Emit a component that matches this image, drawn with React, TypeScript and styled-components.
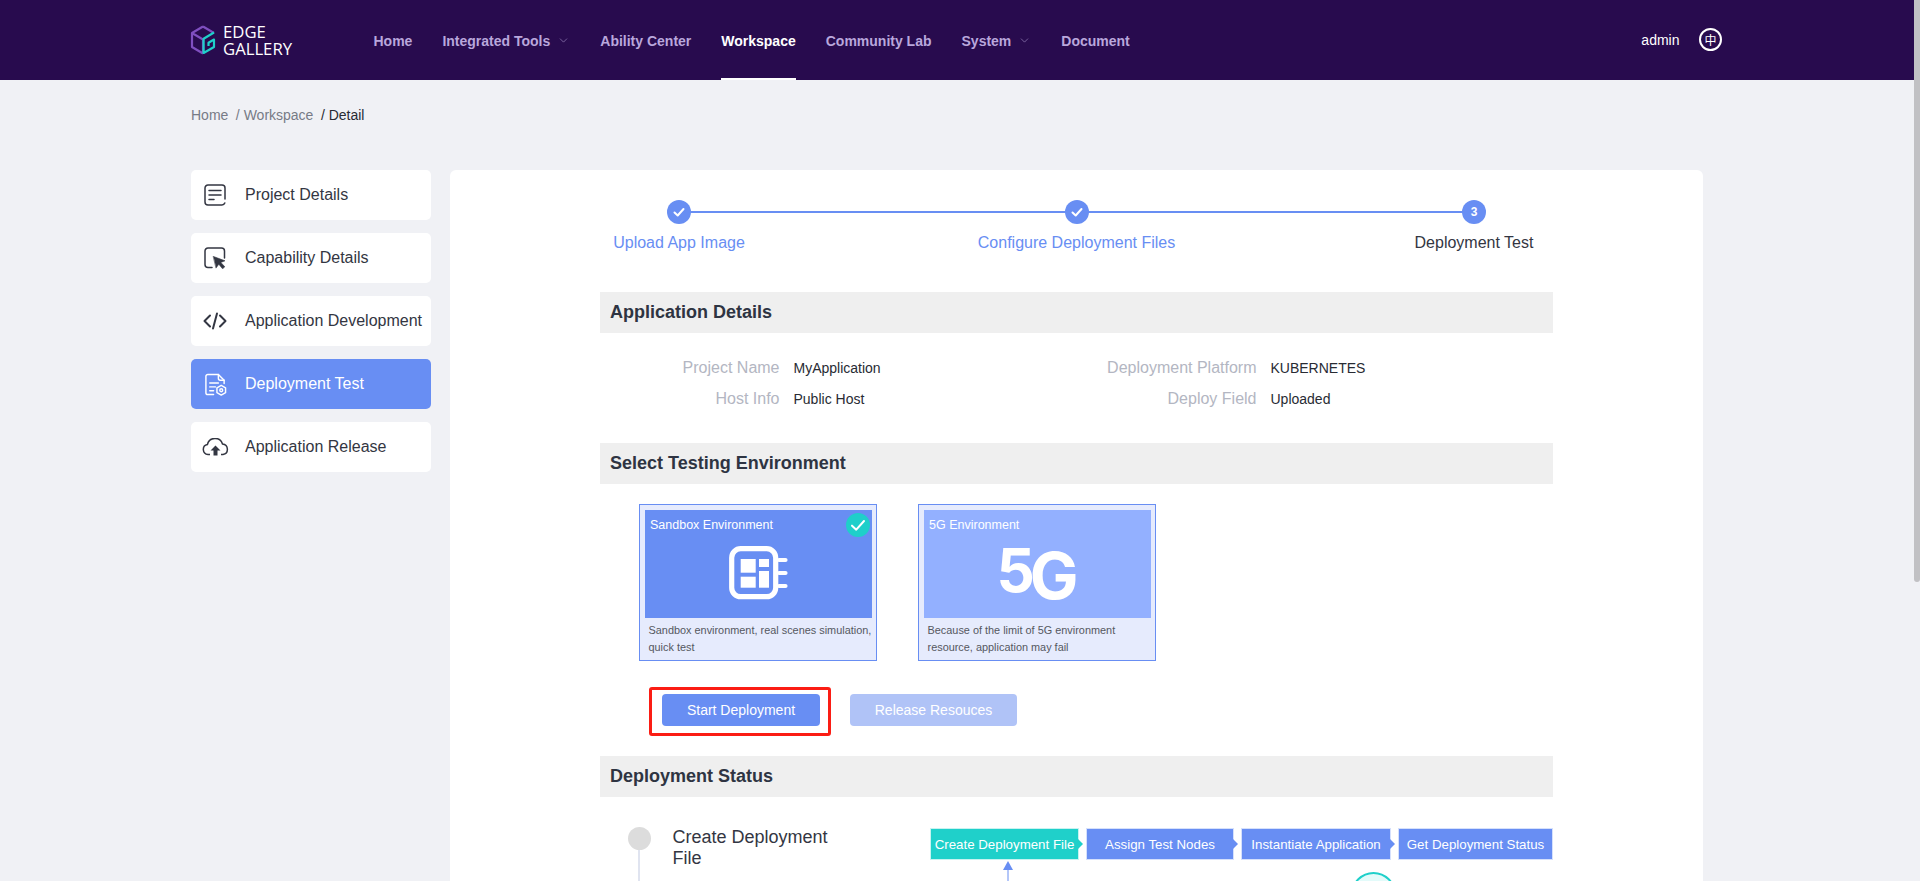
import React from "react";
import styled, { createGlobalStyle } from "styled-components";
import { ChevronDown } from "lucide-react";

const Global = createGlobalStyle`
  html, body { margin: 0; padding: 0; height: 100%; overflow: hidden; background: #f0f1f5; }
  body { font-family: "Liberation Sans", Arial, sans-serif; }
  * { box-sizing: border-box; }
`;

const Viewport = styled.div`
  position: relative;
  height: 100vh;
  overflow: hidden;
  padding-right: 6px;
`;
const ScrollThumb = styled.div`
  position: absolute;
  top: 0;
  right: 0;
  width: 6px;
  height: 582px;
  background: #c1c1c4;
  border-radius: 0 0 3px 3px;
`;
const Header = styled.header`
  height: 80px;
  background: #280b4e;
  display: flex;
  align-items: center;
  padding: 0 192px 0 190px;
`;
const Logo = styled.div`
  display: flex;
  align-items: center;
  gap: 7px;
  width: 183.5px;
`;
const LogoText = styled.div`
  font-family: "Open Sans", sans-serif;
  color: #fff;
  font-size: 16.7px;
  line-height: 17.5px;
  white-space: pre-line;
`;
const Nav = styled.nav`
  display: flex;
  gap: 30px;
  height: 100%;
  flex: 1;
`;
const NavItem = styled.div<{ $active?: boolean }>`
  height: 100%;
  display: flex;
  align-items: center;
  gap: 7px;
  font-size: 14px;
  font-weight: 700;
  padding-top: 3px;
  color: ${(p) => (p.$active ? "#fff" : "#b9a7dc")};
  border-bottom: 2px solid ${(p) => (p.$active ? "#fff" : "transparent")};
`;
const User = styled.div`
  display: flex;
  align-items: center;
  gap: 19.5px;
  color: #fff;
  font-size: 14px;
  padding-bottom: 1px;
`;
const Lang = styled.span`
  width: 23px;
  height: 23px;
  border: 2px solid #fff;
  border-radius: 50%;
  display: flex;
  align-items: center;
  justify-content: center;
  font-family: "Noto Sans CJK SC", sans-serif;
  font-size: 12px;
  line-height: 1;
`;
const Breadcrumb = styled.div`
  padding: 27px 0 0 191px;
  height: 90px;
  font-size: 14px;
  line-height: 16px;
  color: #777b86;
  display: flex;
  gap: 7.5px;
`;
const Current = styled.span`
  color: #282b33;
`;
const Body = styled.div`
  display: flex;
  align-items: flex-start;
  gap: 19px;
  padding-left: 191px;
`;
const Side = styled.aside`
  width: 240px;
  display: flex;
  flex-direction: column;
  gap: 13px;
`;
const SideItem = styled.div<{ $active?: boolean }>`
  height: 50px;
  border-radius: 5px;
  background: ${(p) => (p.$active ? "#688ef3" : "#fff")};
  color: ${(p) => (p.$active ? "#fff" : "#333642")};
  display: flex;
  align-items: center;
  font-size: 16px;
  white-space: nowrap;
`;
const SideIcon = styled.span`
  width: 54px;
  display: flex;
  justify-content: center;
  padding-right: 6px;
`;
const Main = styled.main`
  width: 1253px;
  background: #fff;
  border-radius: 6px 6px 0 0;
  padding: 30px 150px 0;
  min-height: 800px;
`;
const Steps = styled.div`
  position: relative;
  display: flex;
  justify-content: space-between;
  height: 92px;
`;
const StepLine = styled.div`
  position: absolute;
  left: 79px;
  right: 79px;
  top: 11px;
  height: 2px;
  background: #688ef3;
`;
const Step = styled.div<{ $done?: boolean; $w: number }>`
  position: relative;
  width: ${(p) => p.$w}px;
  display: flex;
  flex-direction: column;
  align-items: center;
  gap: 10px;
  font-size: 16px;
  line-height: 18px;
  white-space: nowrap;
  color: ${(p) => (p.$done ? "#688ef3" : "#333642")};
`;
const StepDot = styled.span`
  width: 24px;
  height: 24px;
  border-radius: 50%;
  background: #688ef3;
  color: #fff;
  display: flex;
  align-items: center;
  justify-content: center;
  font-size: 12px;
  font-weight: 700;
`;
const SectionTitle = styled.h2`
  margin: 0;
  height: 41px;
  background: #efefef;
  display: flex;
  align-items: center;
  padding-left: 10px;
  font-size: 18px;
  font-weight: 700;
  color: #2e3442;
`;
const Info = styled.div`
  display: grid;
  grid-template-columns: 179.5px 306px 143px 1fr;
  grid-auto-rows: 31px;
  column-gap: 14px;
  padding-top: 19px;
  height: 110px;
  align-items: center;
`;
const InfoLabel = styled.span`
  text-align: right;
  font-size: 16px;
  color: #b3b6c2;
  white-space: nowrap;
  justify-self: end;
`;
const InfoValue = styled.span`
  font-size: 14px;
  color: #282b33;
`;
const Cards = styled.div`
  display: flex;
  gap: 41px;
  padding: 20px 0 0 39px;
`;
const Card = styled.div`
  position: relative;
  width: 238px;
  height: 157px;
  background: #e6ebfd;
  border: 1px solid #688ef3;
  padding: 5px 4px 5px 5px;
`;
const CardImage = styled.div<{ $light?: boolean }>`
  height: 108px;
  background: ${(p) => (p.$light ? "#93b0ff" : "#688ef3")};
  color: #fff;
  padding: 8px 5px 0;
  font-size: 12.5px;
  line-height: 14px;
  display: flex;
  flex-direction: column;
  align-items: center;
`;
const CardName = styled.span`
  align-self: flex-start;
  height: 28px;
`;
const CardText = styled.p`
  margin: 4px -3px 0 3.5px;
  font-size: 10.9px;
  line-height: 17px;
  color: #55585f;
`;
const CheckBadge = styled.span`
  position: absolute;
  top: 8px;
  right: 6px;
  width: 24px;
  height: 24px;
  border-radius: 50%;
  background: #1fcfca;
  display: flex;
  align-items: center;
  justify-content: center;
`;
const FiveG = styled.div`
  display: flex;
  align-items: flex-end;
  height: 54px;
  font-family: "Inter", sans-serif;
  font-weight: 700;
`;
const Five = styled.span`
  font-size: 60px;
  letter-spacing: -5px;
  line-height: 44px;
  margin-bottom: 8px;
`;
const BigG = styled.span`
  font-size: 65px;
  line-height: 48px;
`;
const Actions = styled.div`
  display: flex;
  align-items: flex-start;
  gap: 19px;
  padding: 26px 0 0 49px;
  height: 95px;
`;
const Highlight = styled.div`
  border: 3px solid #fb1d14;
  border-radius: 3px;
  padding: 4px 8px 0 10px;
  height: 49px;
`;
const Button = styled.button<{ $disabled?: boolean }>`
  display: block;
  height: 32px;
  width: ${(p) => (p.$disabled ? 167 : 158)}px;
  margin-top: ${(p) => (p.$disabled ? 7 : 0)}px;
  border: 0;
  border-radius: 4px;
  background: ${(p) => (p.$disabled ? "#b0c3f7" : "#688ef3")};
  color: #fff;
  font-family: inherit;
  font-size: 14px;
`;
const StatusBody = styled.div`
  position: relative;
  display: flex;
  padding: 29px 0 0 28px;
  height: 300px;
`;
const TimelineItem = styled.div`
  position: relative;
  display: flex;
  align-items: flex-start;
  gap: 21.5px;
  width: 302px;
`;
const TimelineDot = styled.span`
  position: relative;
  flex: none;
  width: 23px;
  height: 23px;
  margin-top: 1px;
  border-radius: 50%;
  background: #dcdcdc;
  &::after {
    content: "";
    position: absolute;
    left: 10px;
    top: 23px;
    width: 2px;
    height: 200px;
    background: #e0e4f0;
  }
`;
const TimelineText = styled.span`
  width: 170px;
  margin-top: 1px;
  font-size: 18px;
  line-height: 21px;
  color: #333642;
`;
const Flow = styled.div`
  position: relative;
  flex: 1;
  margin-top: 2px;
  display: flex;
  gap: 7px;
  height: 100px;
`;
const FlowBox = styled.div<{ $w: number; $on?: boolean; $last?: boolean }>`
  position: relative;
  width: ${(p) => p.$w}px;
  height: 32px;
  background: ${(p) => (p.$on ? "#1fd0ca" : "#688ef3")};
  border: 1px solid ${(p) => (p.$on ? "#c7f3f1" : "#d5e0fc")};
  color: #fff;
  font-size: 13.3px;
  white-space: nowrap;
  display: flex;
  align-items: center;
  justify-content: center;
  &::after {
    content: "";
    display: ${(p) => (p.$last ? "none" : "block")};
    position: absolute;
    left: 100%;
    top: 10px;
    border-left: 5px solid ${(p) => (p.$on ? "#1fd0ca" : "#688ef3")};
    border-top: 5px solid transparent;
    border-bottom: 5px solid transparent;
  }
`;
const UpArrow = styled.svg`
  position: absolute;
  left: 72px;
  top: 33px;
`;
const FlowNode = styled.span`
  position: absolute;
  left: 421px;
  top: 44px;
  width: 45px;
  height: 45px;
  border: 2px solid #1fd0ca;
  border-radius: 50%;
  background: #e3fbfa;
`;

const Ink = "#333642";

const DocIcon = () => (
  <svg width="22" height="22" viewBox="0 0 22 22" fill="none" stroke={Ink} strokeWidth="1.5" strokeLinecap="round">
    <path d="M21 15V4a3 3 0 0 0-3-3H4a3 3 0 0 0-3 3v14a3 3 0 0 0 3 3h14a3 3 0 0 0 2.8-2" />
    <path d="M5 6.5h12M5 11h12M5 15.5h5" />
  </svg>
);
const CursorIcon = () => (
  <svg width="22" height="22" viewBox="0 0 22 22" fill="none" stroke={Ink} strokeWidth="1.5" strokeLinecap="round">
    <path d="M8 20.5H4a3 3 0 0 1-3-3V4a3 3 0 0 1 3-3h13.5a3 3 0 0 1 3 3v7" />
    <path d="M9.5 9.5l11.5 4.3-4.2 1.6 4 4.4-2.2 2-3.8-4.6-2.6 3.6z" fill={Ink} strokeWidth="0.6" strokeLinejoin="round" />
  </svg>
);
const CodeIcon = () => (
  <svg width="24" height="18" viewBox="0 0 24 18" fill="none" stroke={Ink} strokeWidth="2" strokeLinecap="round" strokeLinejoin="round">
    <path d="M7 3.5 1.5 9 7 14.5M17 3.5 22.5 9 17 14.5M14 1.5 10 16.5" />
  </svg>
);
const DeployIcon = () => (
  <svg width="23" height="23" viewBox="0 0 24 24" fill="none" stroke="#fff" strokeWidth="1.5" strokeLinecap="round" strokeLinejoin="round">
    <path d="M10 22.5H4a2 2 0 0 1-2-2V3.5a2 2 0 0 1 2-2h11l6 6V11" />
    <path d="M15 1.5v4a2 2 0 0 0 2 2h4" />
    <path d="M6 10.5h9M6 14.5h6M6 18.5h4" />
    <path d="M18 13l4.5 2.5v5L18 23l-4.5-2.5v-5z" />
    <circle cx="18" cy="18" r="1.5" />
  </svg>
);
const CloudIcon = () => (
  <svg width="27" height="18" viewBox="0 0 27 18" fill="none" stroke={Ink} strokeWidth="1.5" strokeLinejoin="round">
    <path d="M8 16.5H6a5 5 0 0 1-.6-9.9A7.8 7.8 0 0 1 20.5 6 5.3 5.3 0 0 1 21 16.5H19" />
    <path d="M13.5 7.5l-5 5h3V17.5h4V12.5h3z" fill={Ink} stroke="none" />
  </svg>
);
const ChipIcon = () => (
  <svg width="59" height="54" viewBox="0 0 59 54" fill="none">
    <rect x="2.7" y="2.7" width="44" height="48" rx="9" stroke="#fff" strokeWidth="5.2" />
    <rect x="11.7" y="13" width="15" height="13.7" fill="#fff" />
    <rect x="30" y="13" width="10" height="8" fill="#fff" />
    <rect x="11.7" y="30.7" width="15" height="11" fill="#fff" />
    <rect x="30" y="25" width="10" height="16.7" fill="#fff" />
    <path d="M50 14h6.5M50 27h6.5M50 40h6.5" stroke="#fff" strokeWidth="4.2" strokeLinecap="round" />
  </svg>
);
const Check = ({ size = 12, width = 2 }: { size?: number; width?: number }) => (
  <svg width={size} height={size} viewBox="0 0 12 12" fill="none" stroke="#fff" strokeWidth={width} strokeLinecap="round" strokeLinejoin="round">
    <path d="M1.5 6.5 4.7 9.5 10.5 3" />
  </svg>
);
const LogoMark = () => (
  <svg width="26" height="30" viewBox="0 0 26 30" fill="none">
    <path d="M13 1.5 24 8M13 1.5 2 8v14l11 6.5M2 8l11 6.5V28.5" stroke="#7f4fc0" strokeWidth="2.2" strokeLinejoin="round" />
    <path d="M24 7.5 13.6 13.8V28L24 22V14.5l-5.5 3.2V21" stroke="#1fd0ca" strokeWidth="2.2" strokeLinejoin="round" />
  </svg>
);

const sideItems = [
  { label: "Project Details", icon: <DocIcon /> },
  { label: "Capability Details", icon: <CursorIcon /> },
  { label: "Application Development", icon: <CodeIcon /> },
  { label: "Deployment Test", icon: <DeployIcon />, active: true },
  { label: "Application Release", icon: <CloudIcon /> },
];

const navItems = [
  { label: "Home" },
  { label: "Integrated Tools", menu: true },
  { label: "Ability Center" },
  { label: "Workspace", active: true },
  { label: "Community Lab" },
  { label: "System", menu: true },
  { label: "Document" },
];

export default function App() {
  return (
    <Viewport>
      <Global />
      <Header>
        <Logo>
          <LogoMark />
          <LogoText>{"EDGE\nGALLERY"}</LogoText>
        </Logo>
        <Nav>
          {navItems.map((n) => (
            <NavItem key={n.label} $active={n.active}>
              {n.label}
              {n.menu && <ChevronDown size={13} strokeWidth={1} />}
            </NavItem>
          ))}
        </Nav>
        <User>
          admin
          <Lang>中</Lang>
        </User>
      </Header>
      <Breadcrumb>
        <span>Home</span>
        <span>/ Workspace</span>
        <Current>/ Detail</Current>
      </Breadcrumb>
      <Body>
        <Side>
          {sideItems.map((s) => (
            <SideItem key={s.label} $active={s.active}>
              <SideIcon>{s.icon}</SideIcon>
              {s.label}
            </SideItem>
          ))}
        </Side>
        <Main>
          <Steps>
            <StepLine />
            <Step $done $w={158}>
              <StepDot><Check /></StepDot>
              Upload App Image
            </Step>
            <Step $done $w={200}>
              <StepDot><Check /></StepDot>
              Configure Deployment Files
            </Step>
            <Step $w={158}>
              <StepDot>3</StepDot>
              Deployment Test
            </Step>
          </Steps>
          <SectionTitle>Application Details</SectionTitle>
          <Info>
            <InfoLabel>Project Name</InfoLabel>
            <InfoValue>MyApplication</InfoValue>
            <InfoLabel>Deployment Platform</InfoLabel>
            <InfoValue>KUBERNETES</InfoValue>
            <InfoLabel>Host Info</InfoLabel>
            <InfoValue>Public Host</InfoValue>
            <InfoLabel>Deploy Field</InfoLabel>
            <InfoValue>Uploaded</InfoValue>
          </Info>
          <SectionTitle>Select Testing Environment</SectionTitle>
          <Cards>
            <Card>
              <CardImage>
                <CardName>Sandbox Environment</CardName>
                <ChipIcon />
              </CardImage>
              <CheckBadge><Check size={16} width={1.5} /></CheckBadge>
              <CardText>Sandbox environment, real scenes simulation, quick test</CardText>
            </Card>
            <Card>
              <CardImage $light>
                <CardName>5G Environment</CardName>
                <FiveG>
                  <Five>5</Five>
                  <BigG>G</BigG>
                </FiveG>
              </CardImage>
              <CardText>Because of the limit of 5G environment resource, application may fail</CardText>
            </Card>
          </Cards>
          <Actions>
            <Highlight>
              <Button>Start Deployment</Button>
            </Highlight>
            <Button $disabled>Release Resouces</Button>
          </Actions>
          <SectionTitle>Deployment Status</SectionTitle>
          <StatusBody>
            <TimelineItem>
              <TimelineDot />
              <TimelineText>Create Deployment File</TimelineText>
            </TimelineItem>
            <Flow>
              <FlowBox $w={149} $on>Create Deployment File</FlowBox>
              <FlowBox $w={148}>Assign Test Nodes</FlowBox>
              <FlowBox $w={150}>Instantiate Application</FlowBox>
              <FlowBox $w={155} $last>Get Deployment Status</FlowBox>
              <UpArrow width="12" height="30" viewBox="0 0 12 30" fill="none">
                <path d="M6 0 1 9h10z" fill="#688ef3" />
                <path d="M6 9v21" stroke="#688ef3" strokeWidth="1" />
              </UpArrow>
              <FlowNode />
            </Flow>
          </StatusBody>
        </Main>
      </Body>
      <ScrollThumb />
    </Viewport>
  );
}
